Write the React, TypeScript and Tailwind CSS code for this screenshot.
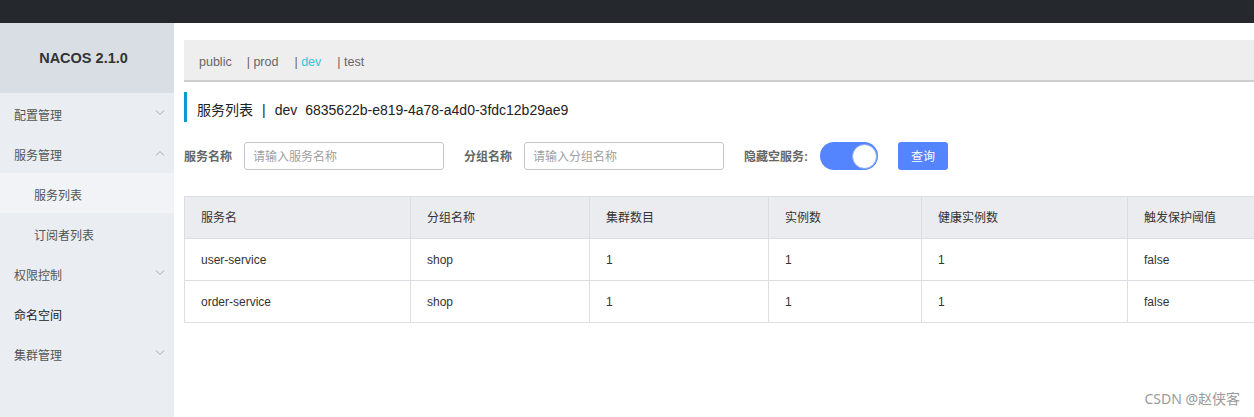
import React from "react";

const font = { fontFamily: '"Liberation Sans", "Noto Sans CJK SC", sans-serif' };

function Chevron({ up = false }: { up?: boolean }) {
  return (
    <svg width="10" height="6" viewBox="0 0 10 6" className="text-[#a3a8b0]">
      {up ? (
        <polyline points="1,5.5 5,1.5 9,5.5" fill="none" stroke="currentColor" strokeWidth="1" />
      ) : (
        <polyline points="1,0.5 5,4.5 9,0.5" fill="none" stroke="currentColor" strokeWidth="1" />
      )}
    </svg>
  );
}

function MenuItem({
  label,
  chevron,
  sub = false,
  active = false,
  dark = false,
}: {
  label: string;
  chevron?: "up" | "down";
  sub?: boolean;
  active?: boolean;
  dark?: boolean;
}) {
  return (
    <div
      className={`h-10 flex items-center justify-between pr-[9px] text-[12px] ${
        sub ? "pl-[34px]" : "pl-[14px]"
      } ${active ? "bg-[#f2f3f7]" : ""} ${dark ? "text-[#222]" : "text-[#555]"}`}
    >
      <span className="pt-[5px]">{label}</span>
      {chevron && <Chevron up={chevron === "up"} />}
    </div>
  );
}

const cols = [
  { title: "服务名", w: "w-[225px]" },
  { title: "分组名称", w: "w-[179px]" },
  { title: "集群数目", w: "w-[179px]" },
  { title: "实例数", w: "w-[153px]" },
  { title: "健康实例数", w: "w-[206px]" },
  { title: "触发保护阈值", w: "w-[200px]" },
];

const rows = [
  ["user-service", "shop", "1", "1", "1", "false"],
  ["order-service", "shop", "1", "1", "1", "false"],
];

export default function App() {
  return (
    <div className="h-[417px] w-[1254px] flex flex-col overflow-hidden bg-white relative" style={font}>
      <div className="h-[23px] bg-[#25292e] shrink-0" />
      <div className="flex flex-1 min-h-0">
        {/* Sidebar */}
        <div className="w-[174px] shrink-0 bg-[#eaedf1] flex flex-col">
          <div className="h-[70px] bg-[#d9dee4] flex items-center justify-center text-[14.5px] font-bold text-[#333] pr-[7px] pt-[2px]">
            NACOS 2.1.0
          </div>
          <MenuItem label="配置管理" chevron="down" />
          <MenuItem label="服务管理" chevron="up" />
          <MenuItem label="服务列表" sub active />
          <MenuItem label="订阅者列表" sub />
          <MenuItem label="权限控制" chevron="down" />
          <MenuItem label="命名空间" dark />
          <MenuItem label="集群管理" chevron="down" />
        </div>

        {/* Main */}
        <div className="flex-1 min-w-0 pl-[10px] pt-[17px] overflow-hidden">
          <div className="h-[42px] bg-[#eeeeee] border-b-2 border-[#cfcfcf] flex items-center pl-[15px] pt-[5px] text-[12.5px] text-[#666]">
            <span>public</span>
            <span className="ml-[15px]">| prod</span>
            <span className="ml-[16px]">
              | <span className="text-[#33c3e0]">dev</span>
            </span>
            <span className="ml-[16px]">| test</span>
          </div>

          <div className="mt-[10px] h-[30px] border-l-[3px] border-[#0a9bd3] flex items-center pl-[10px] pt-[7px] text-[14px] text-[#222]">
            <span>服务列表</span>
            <span className="mx-[9px]">|</span>
            <span>dev</span>
            <span className="ml-[8px]">6835622b-e819-4a78-a4d0-3fdc12b29ae9</span>
          </div>

          <div className="mt-[20px] h-[28px] flex items-center text-[12px]">
            <span className="font-bold text-[#666] w-[60px] pt-[2px]">服务名称</span>
            <div className="w-[200px] h-[28px] border border-[#c4c6cf] rounded-[3px] flex items-center px-[8px] pt-[2px] text-[#a0a0a0]">
              请输入服务名称
            </div>
            <span className="ml-[20px] font-bold text-[#666] w-[60px] pt-[2px]">分组名称</span>
            <div className="w-[200px] h-[28px] border border-[#c4c6cf] rounded-[3px] flex items-center px-[8px] pt-[2px] text-[#a0a0a0]">
              请输入分组名称
            </div>
            <span className="ml-[20px] font-bold text-[#666] w-[76px] pt-[2px]">隐藏空服务:</span>
            <div className="w-[58px] h-[28px] rounded-full bg-[#5584ff] flex items-center justify-end pr-[1px]">
              <div className="w-[25px] h-[25px] rounded-full bg-white border border-[#8aa8ff]" />
            </div>
            <div className="ml-[20px] w-[50px] h-[28px] rounded-[3px] bg-[#5584ff] text-white flex items-center justify-center pt-[2px]">
              查询
            </div>
          </div>

          <div className="mt-[26px] w-[1143px]">
            <div className="flex bg-[#ebecf0] border border-[#dcdee3] h-[43px] text-[12px] text-[#333]">
              {cols.map((c, i) => (
                <div
                  key={c.title}
                  className={`${c.w} shrink-0 flex items-center pl-[16px] pt-[1px] ${i > 0 ? "border-l border-[#dcdee3]" : ""}`}
                >
                  {c.title}
                </div>
              ))}
            </div>
            {rows.map((r, ri) => (
              <div key={ri} className="flex border border-t-0 border-[#dcdee3] h-[42px] text-[12px] text-[#333]">
                {r.map((v, i) => (
                  <div
                    key={i}
                    className={`${cols[i].w} shrink-0 flex items-center pl-[16px] pt-[1px] ${i > 0 ? "border-l border-[#dcdee3]" : ""}`}
                  >
                    {v}
                  </div>
                ))}
              </div>
            ))}
          </div>
        </div>
      </div>

      <div className="absolute right-[14px] bottom-[8px] text-[14px] text-[#9a9a9a]" style={{ fontFamily: '"Noto Sans", "Noto Sans CJK SC", sans-serif' }}>
        CSDN @赵侠客
      </div>
    </div>
  );
}
